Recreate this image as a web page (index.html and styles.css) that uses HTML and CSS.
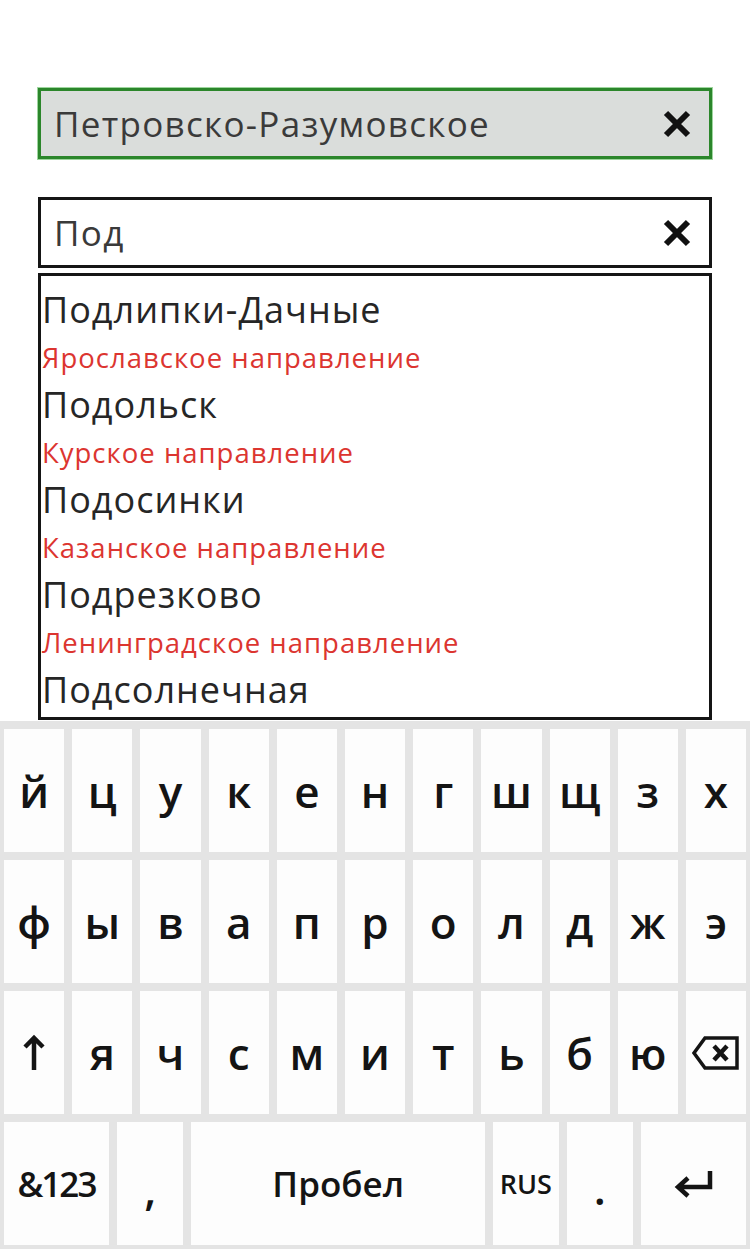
FILE: index.html
```html
<!DOCTYPE html>
<html lang="ru">
<head>
<meta charset="utf-8">
<title>Поиск станции</title>
<link rel="stylesheet" href="styles.css">
</head>
<body>
<div class="screen">
  <div class="fields">
    <div class="field selected">
      <span class="field-text">Петровско-Разумовское</span>
      <svg class="clear" viewBox="0 0 30 30" width="30" height="30"><path d="M4 4 L26 26 M26 4 L4 26" /></svg>
    </div>
    <div class="field search">
      <span class="field-text">Под</span>
      <svg class="clear" viewBox="0 0 30 30" width="30" height="30"><path d="M4 4 L26 26 M26 4 L4 26" /></svg>
    </div>
    <div class="list">
      <div class="name">Подлипки-Дачные</div>
      <div class="dir">Ярославское направление</div>
      <div class="name">Подольск</div>
      <div class="dir">Курское направление</div>
      <div class="name">Подосинки</div>
      <div class="dir">Казанское направление</div>
      <div class="name">Подрезково</div>
      <div class="dir">Ленинградское направление</div>
      <div class="name">Подсолнечная</div>
    </div>
  </div>
  <div class="keyboard">
    <div class="row">
      <div class="key">й</div><div class="key">ц</div><div class="key">у</div><div class="key">к</div><div class="key">е</div><div class="key">н</div><div class="key">г</div><div class="key">ш</div><div class="key">щ</div><div class="key">з</div><div class="key">х</div>
    </div>
    <div class="row">
      <div class="key">ф</div><div class="key">ы</div><div class="key">в</div><div class="key">а</div><div class="key">п</div><div class="key">р</div><div class="key">о</div><div class="key">л</div><div class="key">д</div><div class="key">ж</div><div class="key">э</div>
    </div>
    <div class="row">
      <div class="key"><svg class="icon" viewBox="0 0 22 38" width="22" height="38"><path d="M11 36 V4 M2 13 L11 4 L20 13" /></svg></div>
      <div class="key">я</div><div class="key">ч</div><div class="key">с</div><div class="key">м</div><div class="key">и</div><div class="key">т</div><div class="key">ь</div><div class="key">б</div><div class="key">ю</div>
      <div class="key"><svg class="icon bksp" viewBox="0 0 48 36" width="48" height="36"><path d="M13 3 H45 V33 H13 L2 18 Z" /><path class="bx" d="M22 11 L35 25 M35 11 L22 25" /></svg></div>
    </div>
    <div class="row last">
      <div class="key k-num">&amp;123</div>
      <div class="key k-comma">,</div>
      <div class="key k-space">Пробел</div>
      <div class="key k-lang">RUS</div>
      <div class="key k-dot">.</div>
      <div class="key k-enter"><svg class="icon" viewBox="0 0 42 30" width="42" height="30"><path d="M37 2 V18 H6 M15 9 L5 18 L15 27" /></svg></div>
    </div>
  </div>
</div>
</body>
</html>
```
FILE: styles.css
```css
html, body {
  margin: 0;
  padding: 0;
  background: #ffffff;
}
body {
  width: 750px;
  height: 1249px;
  overflow: hidden;
  font-family: "Open Sans", "Noto Sans", sans-serif;
}
.screen {
  display: flex;
  flex-direction: column;
  height: 1249px;
}
.fields {
  padding: 88px 38px 0 38px;
  display: flex;
  flex-direction: column;
}
.field {
  box-sizing: border-box;
  height: 71px;
  display: flex;
  align-items: center;
  justify-content: space-between;
  padding: 0 17px 0 13px;
}
.field.selected {
  background: #dadddb;
  border: 3px solid #2b862b;
  box-shadow: 0 0 0 1px #9ed69e;
}
.field.search {
  margin-top: 38px;
  background: #ffffff;
  border: 3px solid #151515;
}
.field-text {
  font-size: 35px;
  letter-spacing: 1.3px;
  color: #3a3a3a;
}
.clear path {
  fill: none;
  stroke: #111111;
  stroke-width: 6;
}
.list {
  box-sizing: border-box;
  margin-top: 5px;
  height: 447px;
  border: 3px solid #151515;
  padding: 10px 0 0 1px;
  overflow: hidden;
}
.name, .dir {
  height: 47.5px;
  line-height: 47.5px;
  white-space: nowrap;
}
.name {
  font-size: 36px;
  letter-spacing: 1px;
  color: #262626;
}
.dir {
  font-size: 27.5px;
  letter-spacing: 1px;
  color: #dc3530;
}
.keyboard {
  flex: 1;
  margin-top: 1px;
  background: #e4e4e4;
  padding: 8px 4px 4px 4px;
  display: flex;
  flex-direction: column;
  gap: 8px;
}
.row {
  flex: 1;
  display: flex;
  gap: 8px;
}
.key {
  flex: 1 1 0;
  background: #fdfdfd;
  display: flex;
  align-items: center;
  justify-content: center;
  font-size: 44px;
  font-weight: 600;
  color: #141414;
}
.icon path {
  fill: none;
  stroke: #141414;
  stroke-width: 4.5;
}
.bksp path {
  stroke-width: 3.5;
  stroke-linejoin: miter;
}
.bksp .bx {
  stroke-width: 4.5;
}
.row.last .key {
  font-size: 35px;
  font-weight: 600;
}
.k-num { flex-grow: 104; letter-spacing: -2px; }
.k-comma { flex-grow: 66; font-size: 44px !important; }
.k-space { flex-grow: 291; }
.k-lang { flex-grow: 65; font-size: 27px !important; }
.k-dot { flex-grow: 66; font-size: 44px !important; }
.k-enter { flex-grow: 104; }
.k-comma, .k-dot {
  padding-top: 8px;
}
```
